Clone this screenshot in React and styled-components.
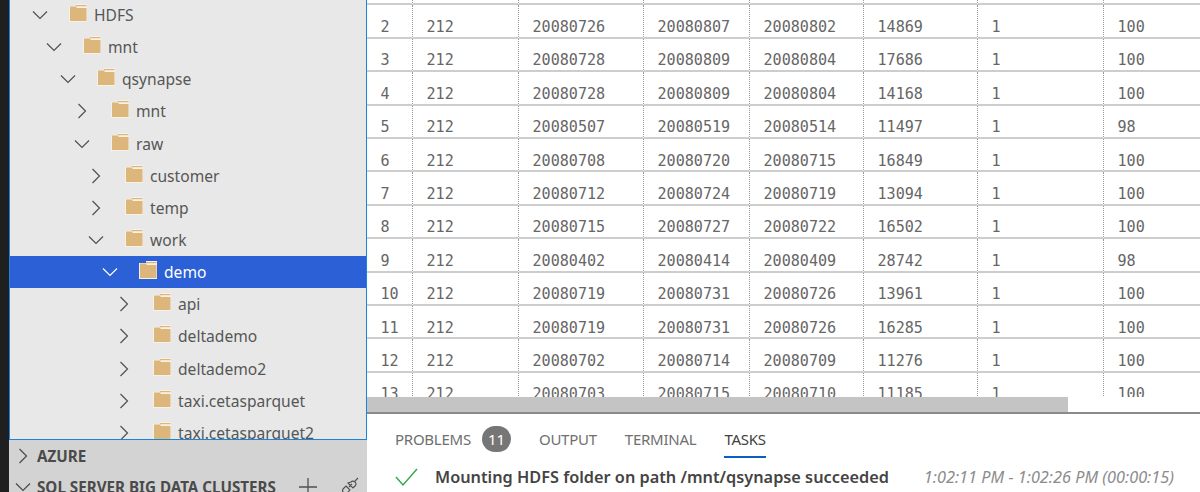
import React from 'react';
import styled, { createGlobalStyle } from 'styled-components';

const GlobalStyle = createGlobalStyle`
  html, body {
    margin: 0;
    padding: 0;
    background: #fff;
    overflow: hidden;
  }
`;

const Page = styled.div`
  display: flex;
  width: 1200px;
  height: 492px;
  overflow: hidden;
  font-family: "Noto Sans", "Open Sans", sans-serif;
`;

const ActivityStrip = styled.div`
  width: 9px;
  flex: none;
  background: #1f1f1f;
`;

const Sidebar = styled.aside`
  width: 358px;
  flex: none;
  display: flex;
  flex-direction: column;
  background: #d3d3d3;
`;

const Tree = styled.div`
  height: 440px;
  flex: none;
  box-sizing: border-box;
  background: #e8e8e8;
  border: 1px solid #1a84dc;
  border-top: 0;
  overflow: hidden;
`;

const Row = styled.div`
  display: flex;
  align-items: center;
  height: 32.15px;
  margin-top: ${p => (p.$first ? '-1px' : '0')};
  padding-left: ${p => 22 + p.$level * 14}px;
  background: ${p => (p.$selected ? '#2b60d6' : 'transparent')};
  color: ${p => (p.$selected ? '#fff' : '#565656')};
  font-size: 15.6px;
`;

const ChevronSlot = styled.span`
  width: 36px;
  flex: none;
  display: flex;
  color: ${p => (p.$selected ? '#fff' : '#505050')};
`;

const RowLabel = styled.span`
  margin-left: 6px;
  white-space: nowrap;
`;

const SectionHeader = styled.div`
  height: 31px;
  flex: none;
  display: flex;
  align-items: center;
  padding-left: 6px;
  color: #4a4a4a;
  font-size: 15.2px;
  font-weight: 700;
  white-space: nowrap;
`;

const SectionTitle = styled.span`
  margin-left: 6px;
  flex: 1;
`;

const SectionActions = styled.span`
  display: flex;
  align-items: center;
  gap: 22px;
  margin-right: 8px;
  color: #505050;
`;

const Main = styled.main`
  flex: 1;
  min-width: 0;
  display: flex;
  flex-direction: column;
`;

const Results = styled.div`
  height: 397px;
  flex: none;
  overflow: hidden;
  background: #fff;
`;

const TableRow = styled.div`
  display: grid;
  grid-template-columns: 46px 106px 125px 106px 114px 114px 126px 1fr;
  height: ${p => (p.$stub ? '5.4px' : '33.4px')};
`;

const Cell = styled.div`
  box-sizing: border-box;
  padding: ${p => (p.$stub ? '0' : '12px 0 0 13.5px')};
  display: flex;
  align-items: center;
  border-bottom: 2px solid #cdcdcd;
  border-right: ${p => (p.$last ? '0' : '1px dotted #9a9a9a')};
  color: #666;
  font-family: "DejaVu Sans Mono", monospace;
  font-size: 15.1px;
`;

const ScrollTrack = styled.div`
  height: 15px;
  flex: none;
  background: #fff;
  border-bottom: 2px solid #8a8a8a;
`;

const ScrollThumb = styled.div`
  width: 701px;
  height: 100%;
  background: #c4c4c4;
`;

const Panel = styled.section`
  flex: 1;
  background: #fff;
  padding-left: 28px;
  overflow: hidden;
`;

const Tabs = styled.div`
  display: flex;
  align-items: flex-start;
  height: 44px;
  gap: 28px;
`;

const Tab = styled.div`
  display: flex;
  align-items: center;
  height: 44px;
  gap: 11px;
  padding-top: 6px;
  box-sizing: border-box;
  color: ${p => (p.$active ? '#424242' : '#6f6f6f')};
  font-size: 15px;
  letter-spacing: -0.25px;
  ${p => p.$active && 'box-shadow: inset 0 -2px 0 #0a5fc4;'}
`;

const Badge = styled.span`
  display: flex;
  align-items: center;
  justify-content: center;
  width: 29px;
  height: 26px;
  border-radius: 13px;
  background: #767676;
  color: #fff;
  font-size: 15px;
`;

const TaskLine = styled.div`
  display: flex;
  align-items: center;
  height: 38px;
  white-space: nowrap;
`;

const TaskName = styled.span`
  margin-left: 16px;
  color: #444;
  font-size: 16.3px;
  font-weight: 600;
`;

const TaskTime = styled.span`
  margin-left: 35px;
  color: #8c8c8c;
  font-size: 16.3px;
  font-style: italic;
`;

const FolderIcon = styled.svg`
  flex: none;
  margin-bottom: 4px;
`;

const Chevron = ({ open }) => (
  <svg width="16" height="16" viewBox="0 0 16 16" fill="none" stroke="currentColor" strokeWidth="1.2">
    {open ? <path d="M1 4.5 L8 11.5 L15 4.5" /> : <path d="M4.5 1 L11.5 8 L4.5 15" />}
  </svg>
);

const Folder = () => (
  <FolderIcon width="20" height="20" viewBox="0 0 20 20">
    <path d="M1 3 H8 V1 H19 V19 H1 Z" fill="#f7f1e6" />
    <rect x="2" y="5" width="16.5" height="13" fill="#dcb67a" />
    <rect x="2" y="3.5" width="6.5" height="2" fill="#dcb67a" />
    <rect x="8" y="2" width="10.5" height="1.2" fill="#dcb67a" />
  </FolderIcon>
);

const Check = () => (
  <svg width="24" height="24" viewBox="0 0 24 24" fill="none" stroke="#2ea84a" strokeWidth="1.4">
    <path d="M1 12 L8 20 L22 4" />
  </svg>
);

const Plus = () => (
  <svg width="18" height="18" viewBox="0 0 18 18" stroke="currentColor" strokeWidth="1.3">
    <path d="M0 9 H18 M9 0 V18" />
  </svg>
);

const Plug = () => (
  <svg width="20" height="20" viewBox="0 0 20 20" fill="none" stroke="currentColor" strokeWidth="1.1">
    <path d="M1 19 L5 15 M7 9 L11 13 L8.5 15.5 A2.8 2.8 0 0 1 4.5 11.5 Z M10 10 L13 7 M9 6 L14 11 L16 9 A2.8 2.8 0 0 0 12 5 Z M16 4 L19 1" />
  </svg>
);

const treeRows = [
  { name: 'HDFS', level: 0, open: true },
  { name: 'mnt', level: 1, open: true },
  { name: 'qsynapse', level: 2, open: true },
  { name: 'mnt', level: 3 },
  { name: 'raw', level: 3, open: true },
  { name: 'customer', level: 4 },
  { name: 'temp', level: 4 },
  { name: 'work', level: 4, open: true },
  { name: 'demo', level: 5, open: true, selected: true },
  { name: 'api', level: 6 },
  { name: 'deltademo', level: 6 },
  { name: 'deltademo2', level: 6 },
  { name: 'taxi.cetasparquet', level: 6 },
  { name: 'taxi.cetasparquet2', level: 6 },
];

const tableRows = [
  [2, 212, 20080726, 20080807, 20080802, 14869, 1, 100],
  [3, 212, 20080728, 20080809, 20080804, 17686, 1, 100],
  [4, 212, 20080728, 20080809, 20080804, 14168, 1, 100],
  [5, 212, 20080507, 20080519, 20080514, 11497, 1, 98],
  [6, 212, 20080708, 20080720, 20080715, 16849, 1, 100],
  [7, 212, 20080712, 20080724, 20080719, 13094, 1, 100],
  [8, 212, 20080715, 20080727, 20080722, 16502, 1, 100],
  [9, 212, 20080402, 20080414, 20080409, 28742, 1, 98],
  [10, 212, 20080719, 20080731, 20080726, 13961, 1, 100],
  [11, 212, 20080719, 20080731, 20080726, 16285, 1, 100],
  [12, 212, 20080702, 20080714, 20080709, 11276, 1, 100],
  [13, 212, 20080703, 20080715, 20080710, 11185, 1, 100],
];

export default function App() {
  return (
    <Page>
      <GlobalStyle />
      <ActivityStrip />
      <Sidebar>
        <Tree>
          {treeRows.map((row, i) => (
            <Row key={i} $first={i === 0} $level={row.level} $selected={row.selected}>
              <ChevronSlot $selected={row.selected}>
                <Chevron open={row.open} />
              </ChevronSlot>
              <Folder />
              <RowLabel>{row.name}</RowLabel>
            </Row>
          ))}
        </Tree>
        <SectionHeader>
          <Chevron />
          <SectionTitle>AZURE</SectionTitle>
        </SectionHeader>
        <SectionHeader>
          <Chevron open />
          <SectionTitle>SQL SERVER BIG DATA CLUSTERS</SectionTitle>
          <SectionActions>
            <Plus />
            <Plug />
          </SectionActions>
        </SectionHeader>
      </Sidebar>
      <Main>
        <Results>
          <TableRow $stub>
            {tableRows[0].map((_, i) => (
              <Cell key={i} $stub $last={i === 7} />
            ))}
          </TableRow>
          {tableRows.map(row => (
            <TableRow key={row[0]}>
              {row.map((value, i) => (
                <Cell key={i} $last={i === 7}>{value}</Cell>
              ))}
            </TableRow>
          ))}
        </Results>
        <ScrollTrack>
          <ScrollThumb />
        </ScrollTrack>
        <Panel>
          <Tabs>
            <Tab>PROBLEMS<Badge>11</Badge></Tab>
            <Tab>OUTPUT</Tab>
            <Tab>TERMINAL</Tab>
            <Tab $active>TASKS</Tab>
          </Tabs>
          <TaskLine>
            <Check />
            <TaskName>Mounting HDFS folder on path /mnt/qsynapse succeeded</TaskName>
            <TaskTime>1:02:11 PM - 1:02:26 PM (00:00:15)</TaskTime>
          </TaskLine>
        </Panel>
      </Main>
    </Page>
  );
}
